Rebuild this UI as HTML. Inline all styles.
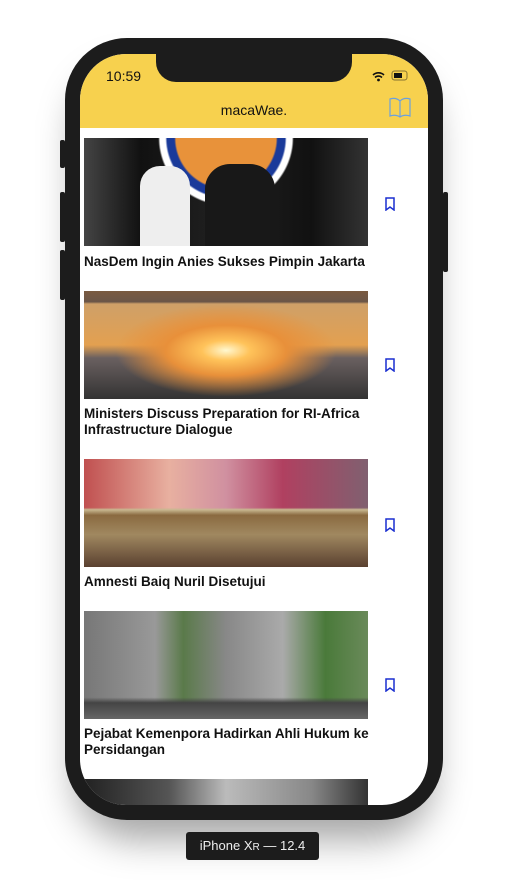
<!DOCTYPE html><html><head><style>
body{margin:0;width:507px;height:896px;background:#fff;position:relative;overflow:hidden;font-family:"Liberation Sans",sans-serif}
.shadow{position:absolute;left:75px;top:70px;width:358px;height:770px;border-radius:60px;background:rgba(0,0,0,.35);filter:blur(18px)}
.phone{position:absolute;left:65px;top:38px;width:378px;height:782px;background:#1c1c1c;border-radius:62px}
.btn{position:absolute;background:#1c1c1c;width:5px;border-radius:2px}
.screen{position:absolute;left:80px;top:54px;width:348px;height:751px;background:#fff;border-radius:46px;overflow:hidden}
.hdr{position:absolute;left:0;top:0;width:348px;height:74px;background:#f7d14e}
.notch{position:absolute;left:76px;top:0;width:196px;height:28px;background:#1c1c1c;border-radius:0 0 20px 20px}
.img{position:absolute;left:4px;width:284px;height:108px}
.t{position:absolute;left:4px;font-size:13.5px;font-weight:bold;color:#111;line-height:16px;width:300px}
.bm{position:absolute;left:304px}
</style></head><body>
<div class="shadow"></div>
<div class="btn" style="left:60px;top:140px;height:28px"></div>
<div class="btn" style="left:60px;top:192px;height:50px"></div>
<div class="btn" style="left:60px;top:250px;height:50px"></div>
<div class="btn" style="left:443px;top:192px;height:80px"></div>
<div class="phone"></div>
<div class="screen">
<div class="hdr"></div>
<div class="notch"></div>
<div style="position:absolute;left:26px;top:14px;font-size:14px;color:#111">10:59</div>
<svg style="position:absolute;left:290px;top:16px" width="40" height="12"><path d="M3 5a8 8 0 0 1 11 0M5 7.5a5 5 0 0 1 7 0" stroke="#111" stroke-width="1.6" fill="none"/><circle cx="8.5" cy="10" r="1.4" fill="#111"/><rect x="22" y="1" width="15" height="9" rx="2.5" fill="none" stroke="#111" stroke-opacity=".5"/><rect x="24" y="3" width="8" height="5" fill="#111"/></svg>
<div style="position:absolute;left:0;width:348px;top:48px;text-align:center;font-size:14px;color:#111">macaWae.</div>
<svg style="position:absolute;left:308px;top:43px" width="24" height="22" viewBox="0 0 24 22"><path d="M12 4C9 1 5 1 2 2v17c3-1 7-1 10 1 3-2 7-2 10-1V2c-3-1-7-1-10 2zM12 4v16" fill="none" stroke="#6aa0e0" stroke-width="1.2"/></svg>
<div class="img" style="top:84px;background:radial-gradient(circle at 50% 0,#e8923a 0 28%,#1a3a9a 29% 33%,#fff 34% 37%,transparent 38%),linear-gradient(90deg,#444 0,#111 20%,#222 50%,#111 80%,#333)"></div>
<div style="position:absolute;left:60px;top:112px;width:50px;height:80px;background:#eee;border-radius:20px 20px 0 0"></div>
<div style="position:absolute;left:125px;top:110px;width:70px;height:82px;background:#181818;border-radius:25px 25px 0 0"></div>
<div class="t" style="top:200px">NasDem Ingin Anies Sukses Pimpin Jakarta</div>
<svg class="bm" style="top:143px" width="12" height="14"><path d="M2 1h8v12l-4-3-4 3z" fill="none" stroke="#1a2fd0" stroke-width="1.5"/></svg>
<div class="img" style="top:237px;background:linear-gradient(180deg,#7a5a40 0,#6b5648 10%,transparent 12%),radial-gradient(ellipse at 50% 55%,#fff8d0 0,#ffc35a 12%,#e8903a 30%,transparent 55%),linear-gradient(180deg,#c8a070 0,#e3a050 50%,#6a6060 62%,#333 100%)"></div>
<div class="t" style="top:352px">Ministers Discuss Preparation for RI-Africa Infrastructure Dialogue</div>
<svg class="bm" style="top:304px" width="12" height="14"><path d="M2 1h8v12l-4-3-4 3z" fill="none" stroke="#1a2fd0" stroke-width="1.5"/></svg>
<div class="img" style="top:405px;background:linear-gradient(180deg,transparent 0 45%,#c8b890 47%,#8a6a40 52%,#a08860 70%,#5a4030 100%),linear-gradient(90deg,#c05050,#e8b0a0 30%,#d090a0 50%,#b04060 70%,#806070)"></div>
<div class="t" style="top:520px">Amnesti Baiq Nuril Disetujui</div>
<svg class="bm" style="top:464px" width="12" height="14"><path d="M2 1h8v12l-4-3-4 3z" fill="none" stroke="#1a2fd0" stroke-width="1.5"/></svg>
<div class="img" style="top:557px;background:linear-gradient(180deg,transparent 0 80%,#444 85%,#666),linear-gradient(90deg,#777 0,#999 25%,#5a7a4a 35%,#888 50%,#aaa 70%,#4a7a3a 85%,#6a8a5a)"></div>
<div class="t" style="top:672px">Pejabat Kemenpora Hadirkan Ahli Hukum ke Persidangan</div>
<svg class="bm" style="top:624px" width="12" height="14"><path d="M2 1h8v12l-4-3-4 3z" fill="none" stroke="#1a2fd0" stroke-width="1.5"/></svg>
<div class="img" style="top:725px;background:linear-gradient(90deg,#222,#555 30%,#bbb 50%,#888 80%,#333)"></div>
</div>
<div style="position:absolute;left:186px;top:832px;width:133px;height:28px;background:#1c1c1c;border-radius:3px;color:#eee;font-size:13px;text-align:center;line-height:28px">iPhone X<span style="font-size:10px">R</span> — 12.4</div>
</body></html>
